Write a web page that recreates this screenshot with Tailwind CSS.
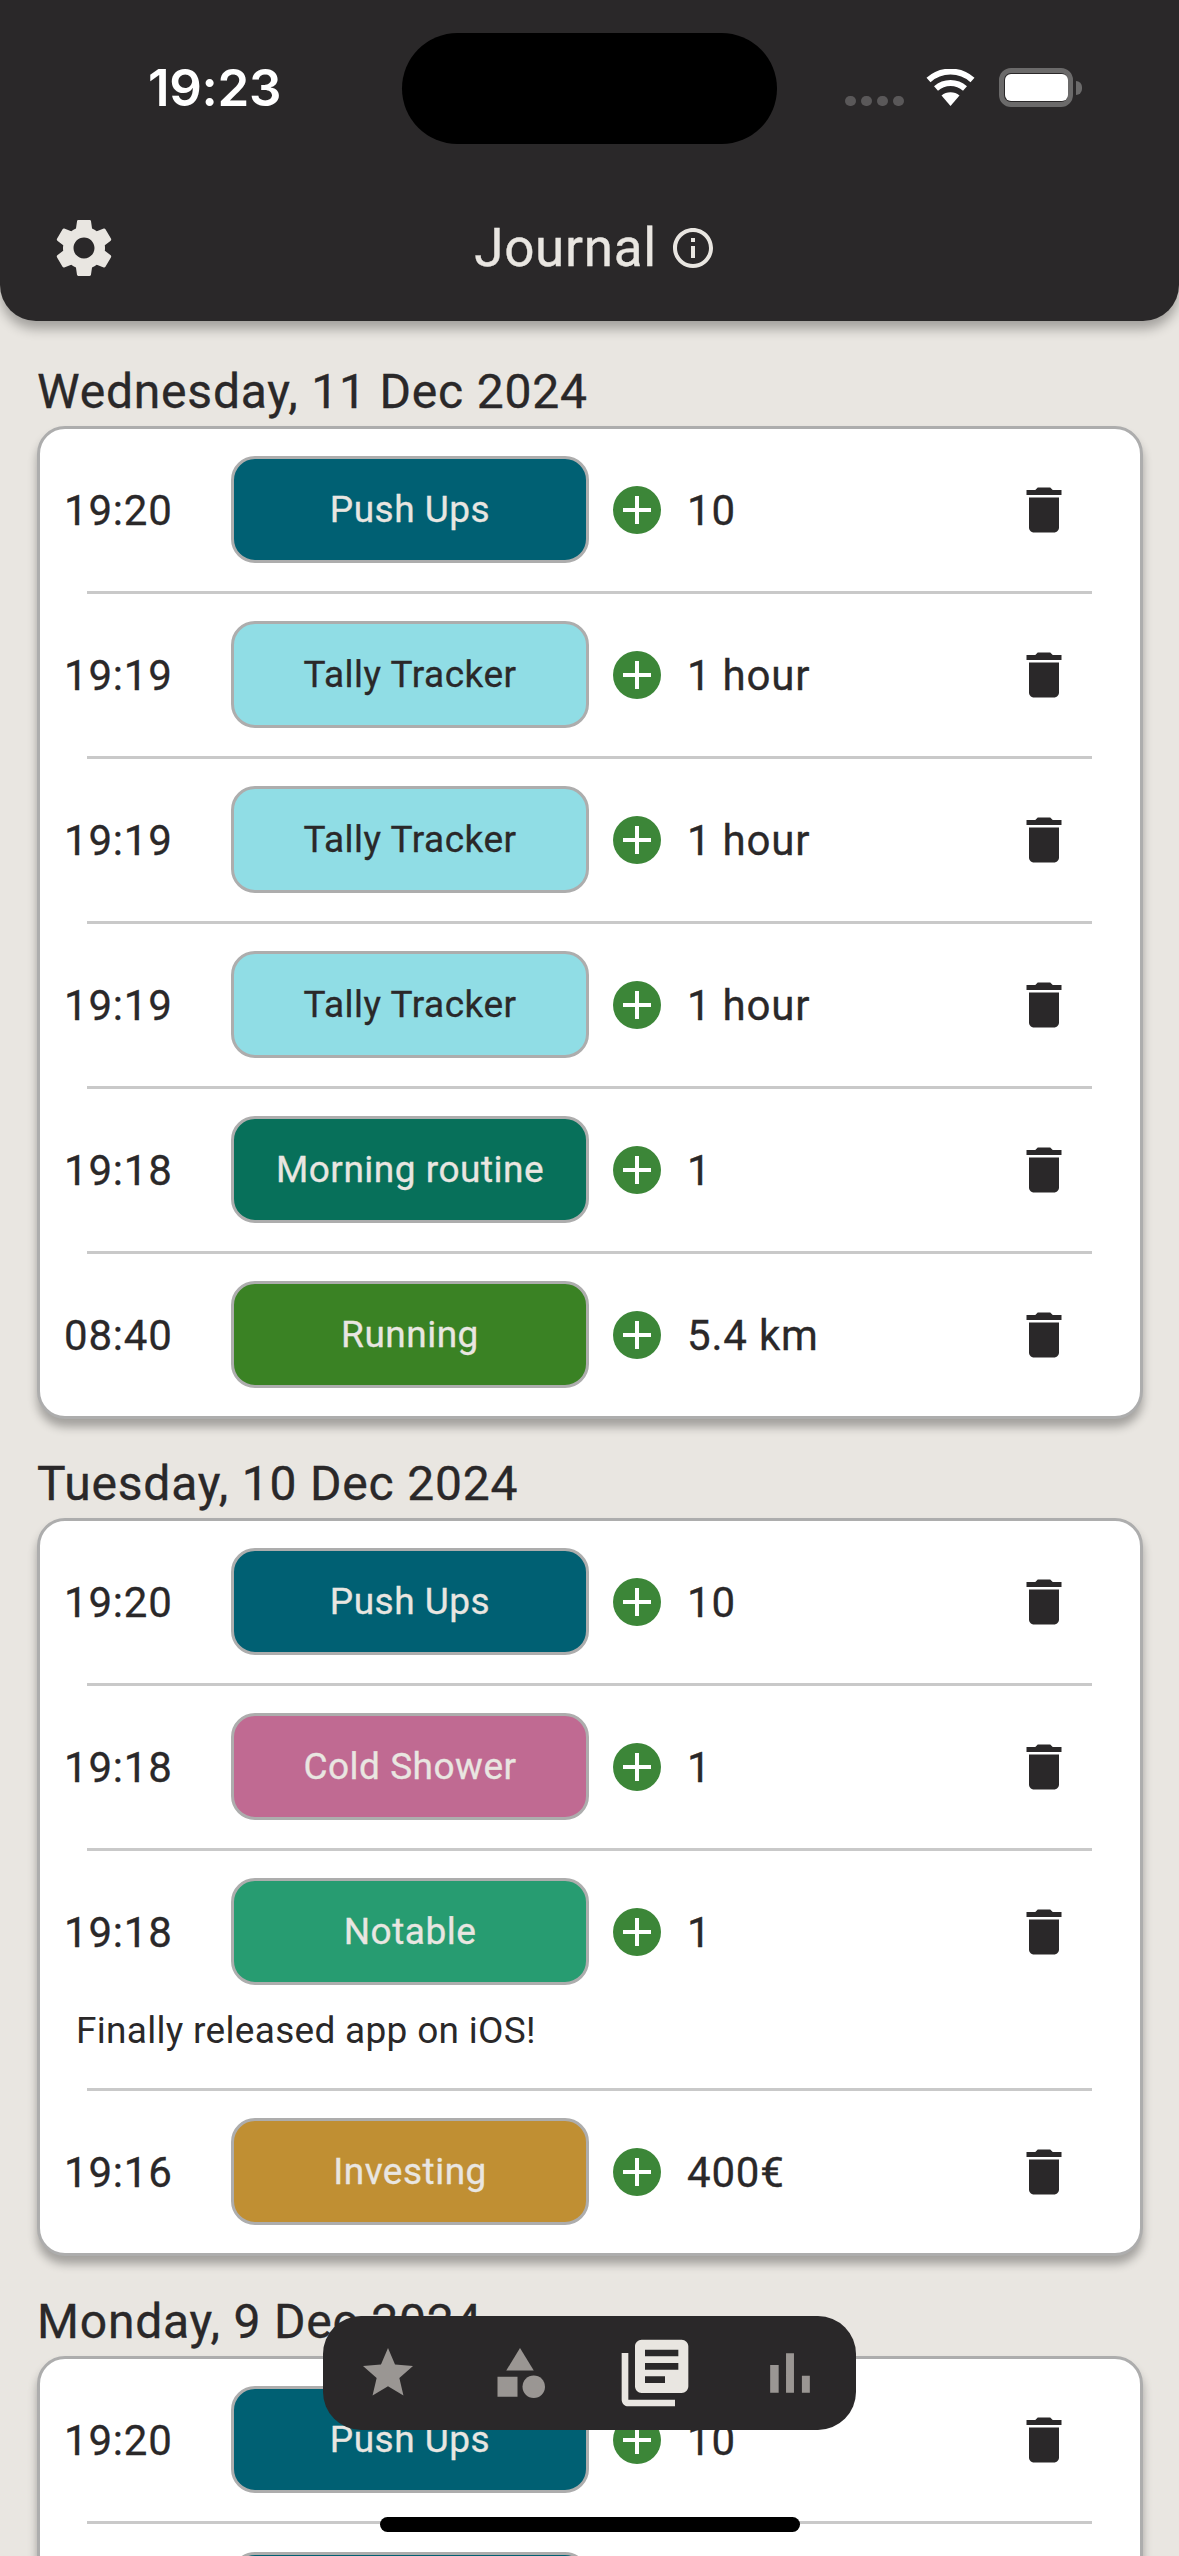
<!DOCTYPE html>
<html><head><meta charset="utf-8"><script src="https://cdn.jsdelivr.net/npm/@tailwindcss/browser@4"></script></head>
<body class="m-0">
<svg class="hidden" width="0" height="0">
<symbol id="trash" viewBox="0 0 24 24"><path fill="#2a2829" d="M6 19c0 1.1.9 2 2 2h8c1.1 0 2-.9 2-2V7H6v12zM19 4h-3.5l-1-1h-5l-1 1H5v2h14V4z"/></symbol>
<symbol id="plus" viewBox="0 0 48 48"><circle cx="24" cy="24" r="24" fill="#3c8638"/><path fill="#fff" d="M22 10h4v12h12v4H26v12h-4V26H10v-4h12z"/></symbol>
</svg>
<div class="relative w-[1179px] h-[2556px] overflow-hidden bg-[#e9e6e1] text-[#2a2829] [font-family:Roboto,sans-serif]">

<header class="relative z-10 h-[321px] bg-[#2a2829] rounded-b-[36px] shadow-[0_8px_12px_rgba(0,0,0,0.3)] flex flex-col">
  <div class="mt-[68px] h-[39px] flex items-center pl-[148px] pr-[106px]">
    <span class="text-[51px] leading-none font-semibold text-white tracking-[-0.3px] [font-family:Inter,sans-serif]">19:23</span>
    <div class="ml-auto flex items-end h-full">
      <div class="flex gap-[5px] mb-[1px]">
        <span class="w-[11px] h-[10px] rounded-full bg-[#5a5859]"></span><span class="w-[11px] h-[10px] rounded-full bg-[#5a5859]"></span><span class="w-[11px] h-[10px] rounded-full bg-[#5a5859]"></span><span class="w-[11px] h-[10px] rounded-full bg-[#5a5859]"></span>
      </div>
      <svg class="ml-[21px] mb-[1px]" width="51" height="37" viewBox="0 0 51 37"><path fill="#fff" d="M25.5 37L16.5 26.5A14 14 0 0 1 34.5 26.5Z"/><path fill="none" stroke="#fff" stroke-width="6" d="M11 19.5A22 22 0 0 1 40 19.5"/><path fill="none" stroke="#fff" stroke-width="6" d="M3.5 11A33 33 0 0 1 47.500 11"/></svg>
      <div class="ml-[23px] relative w-[74px] h-[39px] rounded-[12px] border-[5px] border-[#6b6a6a] flex items-center">
        <span class="w-[63px] h-[27px] rounded-[6px] bg-white ml-px"></span>
        <span class="absolute -right-[14px] top-[8px] w-[6px] h-[14px] rounded-r-full bg-[#6b6a6a]"></span>
      </div>
    </div>
  </div>
  <div class="mt-[106px] h-[70px] grid grid-cols-[1fr_auto_1fr] items-center">
    <svg class="ml-[49px]" width="70" height="70" viewBox="0 0 24 24"><path fill="#e9e6e1" d="M19.14 12.94c.04-.3.06-.61.06-.94 0-.32-.02-.64-.07-.94l2.03-1.58c.18-.14.23-.41.12-.61l-1.92-3.32c-.12-.22-.37-.29-.59-.22l-2.39.96c-.5-.38-1.03-.7-1.62-.94l-.36-2.54c-.04-.24-.24-.41-.48-.41h-3.84c-.24 0-.43.17-.47.41l-.36 2.54c-.59.24-1.13.57-1.62.94l-2.39-.96c-.22-.08-.47 0-.59.22L2.74 8.87c-.12.21-.08.47.12.61l2.03 1.58c-.05.3-.09.63-.09.94s.02.64.07.94l-2.03 1.58c-.18.14-.23.41-.12.61l1.92 3.32c.12.22.37.29.59.22l2.39-.96c.5.38 1.03.7 1.62.94l.36 2.54c.05.24.24.41.48.41h3.84c.24 0 .44-.17.47-.41l.36-2.54c.59-.24 1.13-.56 1.62-.94l2.39.96c.22.08.47 0 .59-.22l1.92-3.32c.12-.22.07-.47-.12-.61l-2.01-1.58zM12 15.6c-1.98 0-3.6-1.62-3.6-3.6s1.62-3.6 3.6-3.6 3.6 1.62 3.6 3.6-1.62 3.6-3.6 3.6z"/></svg>
    <div class="flex items-center gap-[12px] ml-[12px] text-[#e9e6e1]">
      <span class="text-[53px] leading-none tracking-[0.7px] [-webkit-text-stroke:0.35px] mt-px">Journal</span>
      <svg width="48" height="48" viewBox="0 0 24 24"><path fill="#e9e6e1" d="M11 7h2v2h-2zm0 4h2v6h-2zm1-9C6.48 2 2 6.48 2 12s4.48 10 10 10 10-4.48 10-10S17.52 2 12 2zm0 18c-4.41 0-8-3.59-8-8s3.59-8 8-8 8 3.59 8 8-3.59 8-8 8z"/></svg>
    </div>
    <div></div>
  </div>
</header>

<main class="pt-[5px]">
  <!-- Section 1 -->
  <section>
    <h2 class="h-[100px] flex items-end pl-[37px] pb-[6px] text-[48px] leading-[56px] tracking-[0.8px] font-normal [-webkit-text-stroke:0.35px]">Wednesday, 11 Dec 2024</h2>
    <div class="ml-[37px] mr-[36px] border-[3px] border-[#adadad] rounded-[28px] bg-white shadow-[0_8px_10px_rgba(0,0,0,0.3)]">
      <div class="h-[162px] pb-px flex items-center pl-[24px] pr-[66px]">
        <span class="w-[167px] mt-[2px] text-[42px] [-webkit-text-stroke:0.3px] tracking-[0.8px]">19:20</span>
        <div class="w-[358px] h-[107px] rounded-[24px] border-[3px] border-[#adadad] bg-[#006073] text-[#e9e6e1] text-[37px] [-webkit-text-stroke:0.3px] tracking-[0.5px] flex items-center justify-center">Push Ups</div>
        <svg class="ml-[24px]" width="48" height="48"><use href="#plus"/></svg>
        <span class="ml-[26px] mt-[2px] text-[42px] [-webkit-text-stroke:0.3px] tracking-[0.8px] flex-1">10</span>
        <svg width="60" height="60"><use href="#trash"/></svg>
      </div>
      <div class="ml-[47px] mr-[48px] h-[3px] bg-[#c9c9c9]"></div>
      <div class="h-[162px] pb-px flex items-center pl-[24px] pr-[66px]">
        <span class="w-[167px] mt-[2px] text-[42px] [-webkit-text-stroke:0.3px] tracking-[0.8px]">19:19</span>
        <div class="w-[358px] h-[107px] rounded-[24px] border-[3px] border-[#adadad] bg-[#90dde5] text-[#2a2829] text-[37px] [-webkit-text-stroke:0.3px] tracking-[0.5px] flex items-center justify-center">Tally Tracker</div>
        <svg class="ml-[24px]" width="48" height="48"><use href="#plus"/></svg>
        <span class="ml-[26px] mt-[2px] text-[42px] [-webkit-text-stroke:0.3px] tracking-[0.8px] flex-1">1 hour</span>
        <svg width="60" height="60"><use href="#trash"/></svg>
      </div>
      <div class="ml-[47px] mr-[48px] h-[3px] bg-[#c9c9c9]"></div>
      <div class="h-[162px] pb-px flex items-center pl-[24px] pr-[66px]">
        <span class="w-[167px] mt-[2px] text-[42px] [-webkit-text-stroke:0.3px] tracking-[0.8px]">19:19</span>
        <div class="w-[358px] h-[107px] rounded-[24px] border-[3px] border-[#adadad] bg-[#90dde5] text-[#2a2829] text-[37px] [-webkit-text-stroke:0.3px] tracking-[0.5px] flex items-center justify-center">Tally Tracker</div>
        <svg class="ml-[24px]" width="48" height="48"><use href="#plus"/></svg>
        <span class="ml-[26px] mt-[2px] text-[42px] [-webkit-text-stroke:0.3px] tracking-[0.8px] flex-1">1 hour</span>
        <svg width="60" height="60"><use href="#trash"/></svg>
      </div>
      <div class="ml-[47px] mr-[48px] h-[3px] bg-[#c9c9c9]"></div>
      <div class="h-[162px] pb-px flex items-center pl-[24px] pr-[66px]">
        <span class="w-[167px] mt-[2px] text-[42px] [-webkit-text-stroke:0.3px] tracking-[0.8px]">19:19</span>
        <div class="w-[358px] h-[107px] rounded-[24px] border-[3px] border-[#adadad] bg-[#90dde5] text-[#2a2829] text-[37px] [-webkit-text-stroke:0.3px] tracking-[0.5px] flex items-center justify-center">Tally Tracker</div>
        <svg class="ml-[24px]" width="48" height="48"><use href="#plus"/></svg>
        <span class="ml-[26px] mt-[2px] text-[42px] [-webkit-text-stroke:0.3px] tracking-[0.8px] flex-1">1 hour</span>
        <svg width="60" height="60"><use href="#trash"/></svg>
      </div>
      <div class="ml-[47px] mr-[48px] h-[3px] bg-[#c9c9c9]"></div>
      <div class="h-[162px] pb-px flex items-center pl-[24px] pr-[66px]">
        <span class="w-[167px] mt-[2px] text-[42px] [-webkit-text-stroke:0.3px] tracking-[0.8px]">19:18</span>
        <div class="w-[358px] h-[107px] rounded-[24px] border-[3px] border-[#adadad] bg-[#07705a] text-[#e9e6e1] text-[37px] [-webkit-text-stroke:0.3px] tracking-[0.5px] flex items-center justify-center">Morning routine</div>
        <svg class="ml-[24px]" width="48" height="48"><use href="#plus"/></svg>
        <span class="ml-[26px] mt-[2px] text-[42px] [-webkit-text-stroke:0.3px] tracking-[0.8px] flex-1">1</span>
        <svg width="60" height="60"><use href="#trash"/></svg>
      </div>
      <div class="ml-[47px] mr-[48px] h-[3px] bg-[#c9c9c9]"></div>
      <div class="h-[162px] pb-px flex items-center pl-[24px] pr-[66px]">
        <span class="w-[167px] mt-[2px] text-[42px] [-webkit-text-stroke:0.3px] tracking-[0.8px]">08:40</span>
        <div class="w-[358px] h-[107px] rounded-[24px] border-[3px] border-[#adadad] bg-[#3a8224] text-[#e9e6e1] text-[37px] [-webkit-text-stroke:0.3px] tracking-[0.5px] flex items-center justify-center">Running</div>
        <svg class="ml-[24px]" width="48" height="48"><use href="#plus"/></svg>
        <span class="ml-[26px] mt-[2px] text-[42px] [-webkit-text-stroke:0.3px] tracking-[0.8px] flex-1">5.4 km</span>
        <svg width="60" height="60"><use href="#trash"/></svg>
      </div>
    </div>
  </section>
  <!-- Section 2 -->
  <section>
    <h2 class="h-[99px] flex items-end pl-[37px] pb-[6px] text-[48px] leading-[56px] tracking-[0.8px] font-normal [-webkit-text-stroke:0.35px]">Tuesday, 10 Dec 2024</h2>
    <div class="ml-[37px] mr-[36px] border-[3px] border-[#adadad] rounded-[28px] bg-white shadow-[0_8px_10px_rgba(0,0,0,0.3)]">
      <div class="h-[162px] pb-px flex items-center pl-[24px] pr-[66px]">
        <span class="w-[167px] mt-[2px] text-[42px] [-webkit-text-stroke:0.3px] tracking-[0.8px]">19:20</span>
        <div class="w-[358px] h-[107px] rounded-[24px] border-[3px] border-[#adadad] bg-[#006073] text-[#e9e6e1] text-[37px] [-webkit-text-stroke:0.3px] tracking-[0.5px] flex items-center justify-center">Push Ups</div>
        <svg class="ml-[24px]" width="48" height="48"><use href="#plus"/></svg>
        <span class="ml-[26px] mt-[2px] text-[42px] [-webkit-text-stroke:0.3px] tracking-[0.8px] flex-1">10</span>
        <svg width="60" height="60"><use href="#trash"/></svg>
      </div>
      <div class="ml-[47px] mr-[48px] h-[3px] bg-[#c9c9c9]"></div>
      <div class="h-[162px] pb-px flex items-center pl-[24px] pr-[66px]">
        <span class="w-[167px] mt-[2px] text-[42px] [-webkit-text-stroke:0.3px] tracking-[0.8px]">19:18</span>
        <div class="w-[358px] h-[107px] rounded-[24px] border-[3px] border-[#adadad] bg-[#c06a92] text-[#e9e6e1] text-[37px] [-webkit-text-stroke:0.3px] tracking-[0.5px] flex items-center justify-center">Cold Shower</div>
        <svg class="ml-[24px]" width="48" height="48"><use href="#plus"/></svg>
        <span class="ml-[26px] mt-[2px] text-[42px] [-webkit-text-stroke:0.3px] tracking-[0.8px] flex-1">1</span>
        <svg width="60" height="60"><use href="#trash"/></svg>
      </div>
      <div class="ml-[47px] mr-[48px] h-[3px] bg-[#c9c9c9]"></div>
      <div class="h-[162px] pb-px flex items-center pl-[24px] pr-[66px]">
        <span class="w-[167px] mt-[2px] text-[42px] [-webkit-text-stroke:0.3px] tracking-[0.8px]">19:18</span>
        <div class="w-[358px] h-[107px] rounded-[24px] border-[3px] border-[#adadad] bg-[#279c71] text-[#e9e6e1] text-[37px] [-webkit-text-stroke:0.3px] tracking-[0.5px] flex items-center justify-center">Notable</div>
        <svg class="ml-[24px]" width="48" height="48"><use href="#plus"/></svg>
        <span class="ml-[26px] mt-[2px] text-[42px] [-webkit-text-stroke:0.3px] tracking-[0.8px] flex-1">1</span>
        <svg width="60" height="60"><use href="#trash"/></svg>
      </div>
      <div class="h-[103px] -mt-[28px] pl-[36px] pt-[24px] text-[37px] leading-[44px] font-normal tracking-[0.3px]">Finally released app on iOS!</div>
      <div class="ml-[47px] mr-[48px] h-[3px] bg-[#c9c9c9]"></div>
      <div class="h-[162px] pb-px flex items-center pl-[24px] pr-[66px]">
        <span class="w-[167px] mt-[2px] text-[42px] [-webkit-text-stroke:0.3px] tracking-[0.8px]">19:16</span>
        <div class="w-[358px] h-[107px] rounded-[24px] border-[3px] border-[#adadad] bg-[#c08f33] text-[#e9e6e1] text-[37px] [-webkit-text-stroke:0.3px] tracking-[0.5px] flex items-center justify-center">Investing</div>
        <svg class="ml-[24px]" width="48" height="48"><use href="#plus"/></svg>
        <span class="ml-[26px] mt-[2px] text-[42px] [-webkit-text-stroke:0.3px] tracking-[0.8px] flex-1">400€</span>
        <svg width="60" height="60"><use href="#trash"/></svg>
      </div>
    </div>
  </section>
  <!-- Section 3 -->
  <section>
    <h2 class="h-[100px] flex items-end pl-[37px] pb-[6px] text-[48px] leading-[56px] tracking-[0.8px] font-normal [-webkit-text-stroke:0.35px]">Monday, 9 Dec 2024</h2>
    <div class="ml-[37px] mr-[36px] border-[3px] border-[#adadad] rounded-[28px] bg-white shadow-[0_8px_10px_rgba(0,0,0,0.3)]">
      <div class="h-[162px] pb-px flex items-center pl-[24px] pr-[66px]">
        <span class="w-[167px] mt-[2px] text-[42px] [-webkit-text-stroke:0.3px] tracking-[0.8px]">19:20</span>
        <div class="w-[358px] h-[107px] rounded-[24px] border-[3px] border-[#adadad] bg-[#006073] text-[#e9e6e1] text-[37px] [-webkit-text-stroke:0.3px] tracking-[0.5px] flex items-center justify-center">Push Ups</div>
        <svg class="ml-[24px]" width="48" height="48"><use href="#plus"/></svg>
        <span class="ml-[26px] mt-[2px] text-[42px] [-webkit-text-stroke:0.3px] tracking-[0.8px] flex-1">10</span>
        <svg width="60" height="60"><use href="#trash"/></svg>
      </div>
      <div class="ml-[47px] mr-[48px] h-[3px] bg-[#c9c9c9]"></div>
      <div class="h-[162px] flex items-center pl-[24px] pr-[66px]">
        <div class="ml-[167px] w-[358px] h-[107px] rounded-[24px] border-[3px] border-[#adadad] bg-[#006073]"></div>
      </div>
    </div>
  </section>
</main>

<!-- Floating nav -->
<nav class="absolute z-20 left-[323px] top-[2316px] w-[533px] h-[114px] rounded-[38px] bg-[#2a2829] flex items-center">
  <div class="w-[130px] flex justify-center"><svg width="60" height="60" viewBox="0 0 24 24"><path fill="#9a9693" d="M12 17.27L18.18 21l-1.64-7.03L22 9.24l-7.19-.61L12 2 9.19 8.63 2 9.24l5.46 4.73L5.82 21z"/></svg></div>
  <div class="w-[133px] flex justify-center"><svg width="60" height="60" viewBox="0 0 24 24"><path fill="#9a9693" d="M12 2l-5.500 9h11z"/><circle fill="#9a9693" cx="17.500" cy="17.500" r="4.500"/><path fill="#9a9693" d="M3 13.500h8v8H3z"/></svg></div>
  <div class="w-[138px] flex justify-center"><svg width="80" height="80" viewBox="0 0 24 24"><path fill="#e9e6e1" d="M4 6H2v14c0 1.100.9 2 2 2h14v-2H4V6zm16-4H8c-1.100 0-2 .9-2 2v12c0 1.100.9 2 2 2h12c1.100 0 2-.9 2-2V4c0-1.100-.9-2-2-2zm-1 9H9V9h10v2zm-4 4H9v-2h6v2zm4-8H9V5h10v2z"/></svg></div>
  <div class="w-[132px] flex justify-center"><svg width="68" height="68" viewBox="0 0 24 24"><path fill="#9a9693" d="M5 9.200h3V19H5zM10.600 5h2.800v14h-2.800zm5.600 8H19v6h-2.800z"/></svg></div>
</nav>

<!-- Home indicator -->
<div class="absolute z-20 left-[380px] top-[2517px] w-[420px] h-[15px] rounded-full bg-black"></div>
<!-- Camera cutout -->
<div class="absolute z-20 left-[402px] top-[33px] w-[375px] h-[111px] rounded-[56px] bg-black"></div>
</div>
</body></html>
